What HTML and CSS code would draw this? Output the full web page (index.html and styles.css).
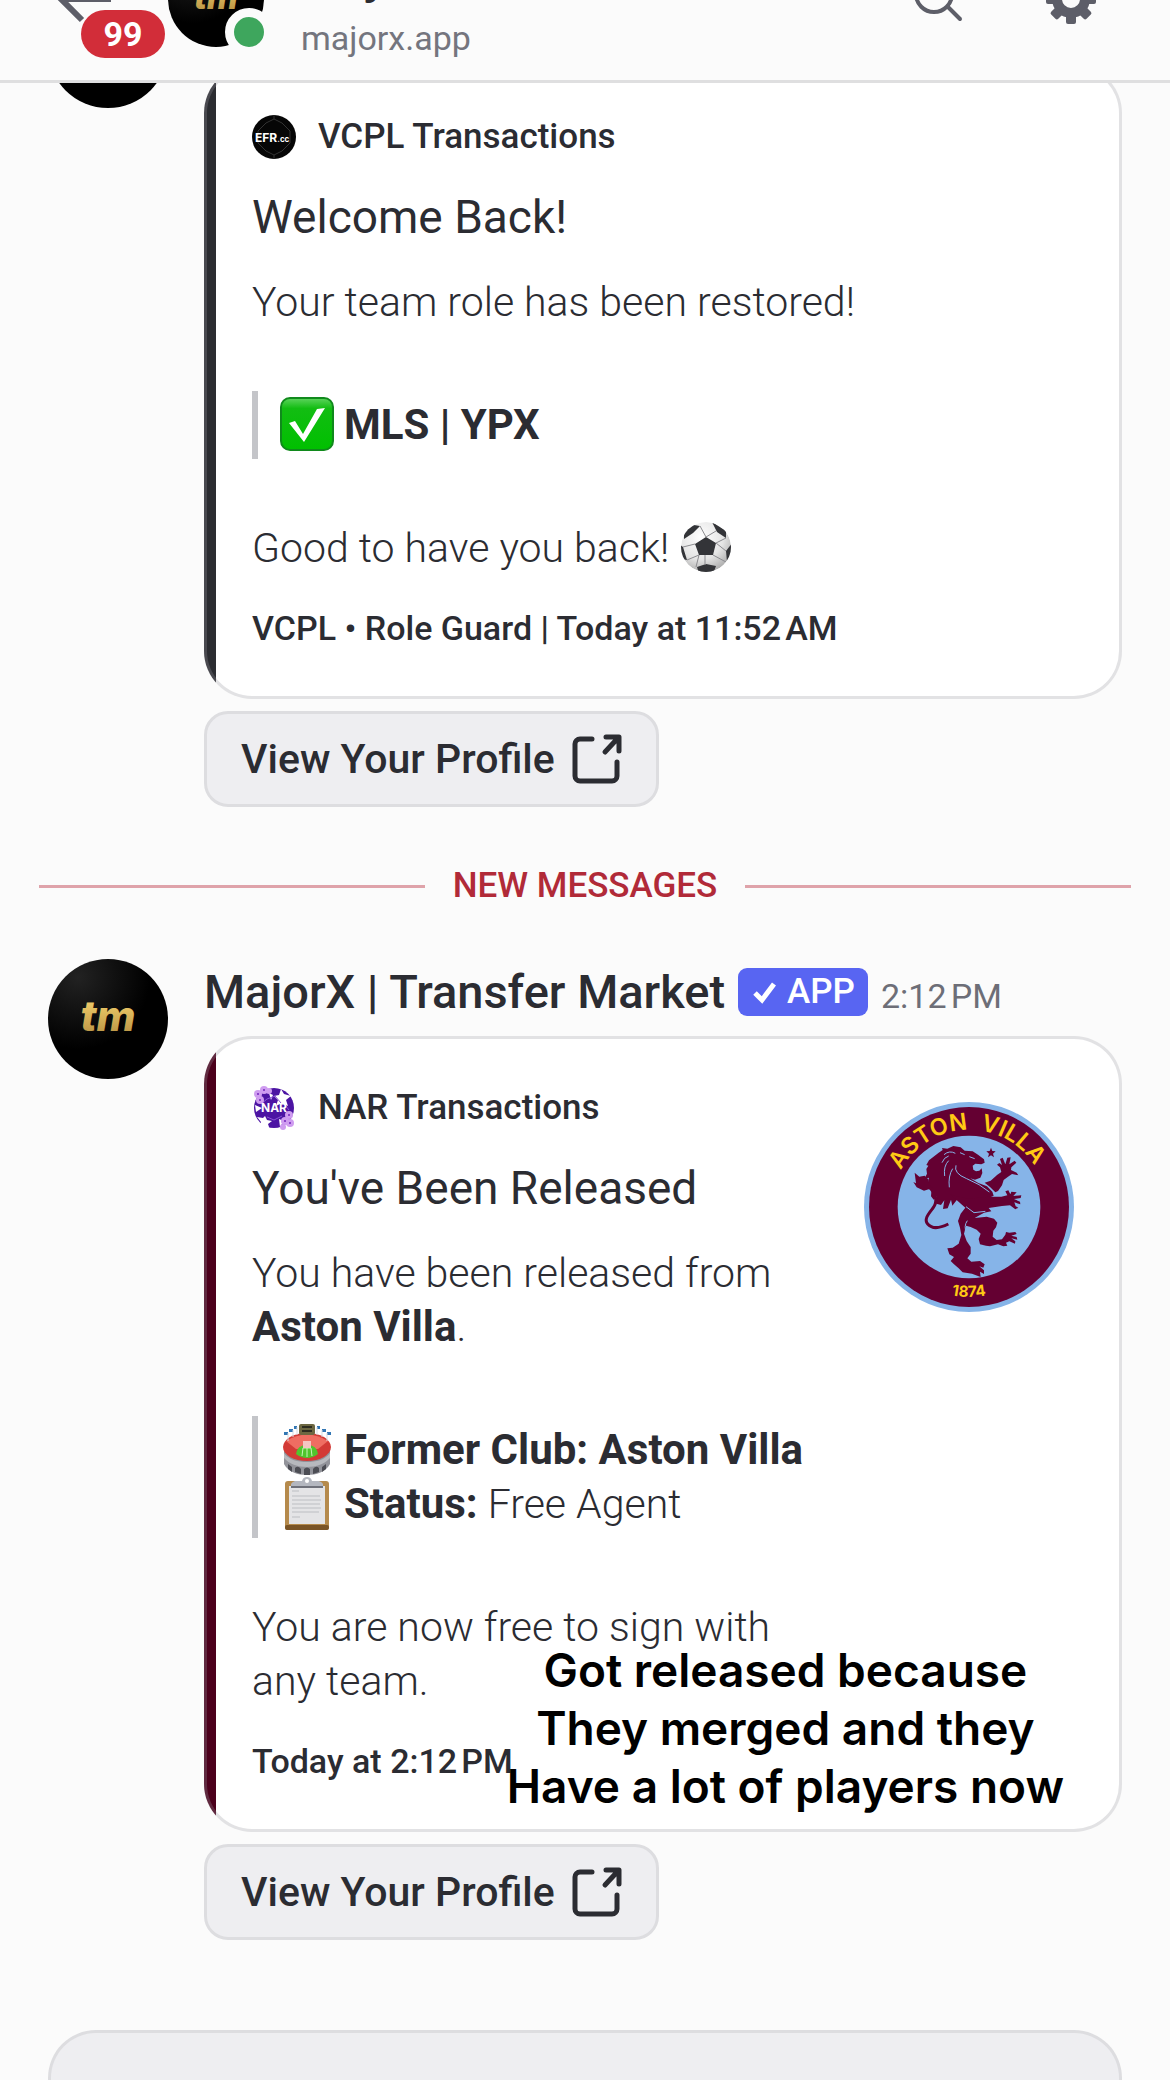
FILE: index.html
```html
<!DOCTYPE html>
<html lang="en">
<head>
    <meta charset="UTF-8">
    <meta name="viewport" content="width=device-width, initial-scale=1.0">
    <title>MajorX | Transfer Market</title>
    <link rel="stylesheet" href="styles.css">
</head>
<body>
    <!-- Shared icons -->
    <svg class="sprite" aria-hidden="true">
        <defs>
            <linearGradient id="gold" x1="0" y1="0" x2="0" y2="1">
                <stop offset="0.3" stop-color="#e8c565"/>
                <stop offset="1" stop-color="#b08a3e"/>
            </linearGradient>
            <radialGradient id="avatarShade" cx="0.25" cy="0.15" r="0.6">
                <stop offset="0" stop-color="#222"/>
                <stop offset="1" stop-color="#000"/>
            </radialGradient>
            <linearGradient id="green" x1="0" y1="0" x2="0" y2="1">
                <stop offset="0" stop-color="#5fd45f"/>
                <stop offset="0.2" stop-color="#12bd12"/>
                <stop offset="1" stop-color="#00c000"/>
            </linearGradient>
            <radialGradient id="ballShade" cx="0.4" cy="0.3" r="0.75">
                <stop offset="0" stop-color="#fff"/>
                <stop offset="0.6" stop-color="#e4e4e4"/>
                <stop offset="1" stop-color="#a8a8a8"/>
            </radialGradient>
            <clipPath id="ballClip"><circle cx="27" cy="27" r="25"/></clipPath>
            <clipPath id="iconClip"><circle cx="22" cy="22" r="22"/></clipPath>
        </defs>
        <symbol id="avatar" viewBox="0 0 120 120">
            <circle cx="60" cy="60" r="60" fill="url(#avatarShade)"/>
            <text x="60" y="72" text-anchor="middle" class="avatar-text">tm</text>
        </symbol>
        <symbol id="external" viewBox="0 0 52 52">
            <g fill="none" stroke="currentColor" stroke-width="5" stroke-linecap="round" stroke-linejoin="round">
                <path d="M22 6H10a5 5 0 0 0-5 5v32a5 5 0 0 0 5 5h32a5 5 0 0 0 5-5V29"/>
                <path d="M36 4h13v14M48 5L35 19"/>
            </g>
        </symbol>
    </svg>

    <header class="topbar">
        <button class="back" aria-label="Back">
            <svg viewBox="0 0 60 60" width="60" height="60">
                <path d="M57 30H6M28 9L7 30l21 21" fill="none" stroke="#5d5e68" stroke-width="6"/>
            </svg>
            <span class="unread">99</span>
        </button>
        <div class="topbar-avatar">
            <svg width="96" height="96"><use href="#avatar"/></svg>
            <span class="status"></span>
        </div>
        <div class="topbar-title">
            <h1>MajorX</h1>
            <p>majorx.app</p>
        </div>
        <button aria-label="Search">
            <svg viewBox="0 0 60 60" width="60" height="60">
                <g fill="none" stroke="#5d5e68" stroke-width="4" stroke-linecap="round">
                    <circle cx="26" cy="25" r="18"/>
                    <path d="M40 38l12 12"/>
                </g>
            </svg>
        </button>
        <button aria-label="Settings">
            <svg viewBox="-30 -30 60 60" width="60" height="60">
                <g fill="#5d5e68">
                    <path fill-rule="evenodd" d="M0-19a19 19 0 1 0 0 38a19 19 0 1 0 0-38zM0-9a9 9 0 1 1 0 18a9 9 0 1 1 0-18z"/>
                    <g id="teeth">
                        <rect x="-5" y="-25" width="10" height="9" rx="2"/>
                        <rect x="-5" y="16" width="10" height="9" rx="2"/>
                        <rect x="-25" y="-5" width="9" height="10" rx="2"/>
                        <rect x="16" y="-5" width="9" height="10" rx="2"/>
                    </g>
                    <use href="#teeth" transform="rotate(45)"/>
                </g>
            </svg>
        </button>
    </header>

    <main class="messages">
        <article class="message continued">
            <svg class="avatar"><use href="#avatar"/></svg>
            <div class="message-body">
                <div class="embed">
                    <div class="embed-content">
                        <div class="author">
                            <svg viewBox="0 0 44 44" width="44" height="44">
                                <g clip-path="url(#iconClip)">
                                    <rect width="44" height="44" fill="#060606"/>
                                    <path d="M14 8l8-4 8 4M6 16l8-8M30 8l8 8M6 16v12M38 16v12M6 28l8 8M38 28l-8 8M14 36l8 4 8-4M22 4V0M22 40v4" fill="none" stroke="#333" stroke-width="1"/>
                                </g>
                                <text x="3" y="27" class="efr-text">EFR<tspan class="efr-small">.cc</tspan></text>
                            </svg>
                            <span>VCPL Transactions</span>
                        </div>
                        <h2>Welcome Back!</h2>
                        <div class="description">
                            <p>Your team role has been restored!</p>
                            <blockquote>
                                <p>
                                    <svg class="emoji" viewBox="0 0 54 54" role="img" aria-label="check mark">
                                        <rect x="1" y="1" width="52" height="52" rx="9" fill="url(#green)" stroke="#108a1c" stroke-width="2"/>
                                        <path d="M9 26l6-2 8 13L37 12l8-1L24 45z" fill="#fff"/>
                                    </svg>
                                    <strong>MLS | YPX</strong>
                                </p>
                            </blockquote>
                            <p>
                                Good to have you back!
                                <svg class="emoji" viewBox="0 0 54 54" role="img" aria-label="football">
                                    <g clip-path="url(#ballClip)">
                                        <circle cx="27" cy="27" r="25" fill="url(#ballShade)"/>
                                        <path d="M27 17l10 6-3 12H20l-4-11zM9 4l12 2-7 7-9 6V8zM33 2l14 9v7l-9-6zM54 22l-7 9 1 11 6-4zM0 24l4 3 4 13-6-1zM18 47l9-3 10 2-3 8H20z" fill="#333438"/>
                                        <path d="M27 17l-6-11M37 23l10-5M34 35l13 7M20 35l-3 12M16 24L4 27M27 17l10-6M26 35v10M47 31l-10-8M8 40l12-5" fill="none" stroke="#8b8b8f" stroke-width="1"/>
                                    </g>
                                </svg>
                            </p>
                        </div>
                        <footer>VCPL • Role Guard | Today at 11:52&#8239;AM</footer>
                    </div>
                </div>
                <a class="link-button" href="#profile">
                    View Your Profile
                    <svg width="52" height="52"><use href="#external"/></svg>
                </a>
            </div>
        </article>

        <div class="divider"><span>NEW MESSAGES</span></div>

        <article class="message">
            <svg class="avatar"><use href="#avatar"/></svg>
            <div class="message-body">
                <div class="message-header">
                    <span class="name">MajorX | Transfer Market</span>
                    <span class="tag">
                        <svg viewBox="0 0 28 28" width="28" height="28">
                            <path d="M4 15l7 7L23 6" fill="none" stroke="#fff" stroke-width="5"/>
                        </svg>
                        APP
                    </span>
                    <time>2:12&#8239;PM</time>
                </div>
                <div class="embed claret">
                    <div class="embed-content">
                        <div class="author">
                            <svg viewBox="0 0 44 44" width="44" height="44">
                                <circle cx="22" cy="22" r="20" fill="#4c14a3"/>
                                <g fill="#fff">
                                    <path d="M29 3l3 5 7 2-5 4 2 6-6-3-6 3 2-6-4-4 5-1zM13 30l2 4 5 1-4 3 2 6-6-4-5 1 2-5-4-5 6 1zM3 19l7 3-6 4z"/>
                                    <path d="M17 7l4 2-2 5zM27 33l5 2-4 6z"/>
                                </g>
                                <g fill="none" stroke="#8a55d6" stroke-width="1">
                                    <path d="M15 13l8-3 6 7M15 31l7 3 8-4M9 18l6-5M33 19l4 5"/>
                                </g>
                                <g fill="#cf9cf0">
                                    <circle cx="6" cy="8" r="4"/><circle cx="12" cy="4" r="4"/><circle cx="8" cy="14" r="4"/><circle cx="17" cy="5" r="3"/>
                                    <circle cx="37" cy="29" r="4"/><circle cx="33" cy="35" r="4"/><circle cx="38" cy="37" r="4"/><circle cx="31" cy="41" r="3"/>
                                </g>
                                <g fill="#7326bd">
                                    <circle cx="6" cy="8" r="1"/><circle cx="12" cy="4" r="1"/><circle cx="8" cy="14" r="1"/>
                                    <circle cx="37" cy="29" r="1"/><circle cx="33" cy="35" r="1"/><circle cx="38" cy="37" r="1"/>
                                </g>
                                <text x="22" y="26" text-anchor="middle" class="nar-text">NAR</text>
                            </svg>
                            <span>NAR Transactions</span>
                        </div>
                        <h2>You've Been Released</h2>
                        <div class="description">
                            <p>You have been released from <strong>Aston Villa</strong>.</p>
                            <blockquote>
                                <p>
                                    <svg class="emoji" viewBox="0 0 54 54" role="img" aria-label="stadium">
                                        <path d="M4 22h46v20c-4 8-14 11-23 11S8 50 4 42z" fill="#92939a"/>
                                        <path d="M4 31c5 7 14 9 23 9s18-2 23-9v5c-5 6-14 9-23 9S9 42 4 36z" fill="#b7b9be"/>
                                        <path d="M8 42l4 3v5l-4-3zM15 46q3-3 6 1v5l-6-2zM24 47q3-3 6 0v6h-6zM33 47q3-4 6-1v4l-6 2zM42 45l4-3v5l-4 3z" fill="#4c4d54"/>
                                        <ellipse cx="27" cy="25" rx="24" ry="14" fill="#d33a36"/>
                                        <path d="M6 19q21-13 42 0l-10 8H16z" fill="#ef6d62"/>
                                        <path d="M16 32q1-9 11-9t11 9q-5 4-11 4t-11-4z" fill="#4fc52d"/>
                                        <path d="M22 34l1-8h8l1 8M27 26v9" fill="none" stroke="#c9f3b8" stroke-width="1"/>
                                        <path d="M23 19h8v7h-8z" fill="#f3c6c2"/>
                                        <rect x="19" y="2" width="16" height="11" rx="2" fill="#6c6741"/>
                                        <path d="M22 5h10M22 9h10" stroke="#2d2c20" stroke-width="2"/>
                                        <path d="M4 10h4v3H4zM9 7h4v3H9zM14 4h3v3h-3zM37 4h3v3h-3zM42 7h4v3h-4zM47 10h4v3h-4z" fill="#3377b4"/>
                                        <path d="M8 11v8M13 8v7M17 5v8M37 5v8M42 8v7M47 11v8" stroke="#d5dbe2" stroke-width="1"/>
                                    </svg>
                                    <strong>Former Club: Aston Villa</strong>
                                </p>
                                <p>
                                    <svg class="emoji" viewBox="0 0 54 54" role="img" aria-label="clipboard">
                                        <rect x="5" y="5" width="44" height="49" rx="3" fill="#b58a4c"/>
                                        <rect x="5" y="49" width="44" height="5" rx="2" fill="#7a5426"/>
                                        <rect x="9" y="10" width="36" height="38" fill="#e4e4e6"/>
                                        <path d="M12 15h7M12 20h28M12 24h29M12 28h28M12 32h29M12 36h27M12 41h8" stroke="#d0d1d4" stroke-width="2"/>
                                        <path d="M11 11V8q1-2 4-3h7q1-4 5-4t5 4h7q3 1 4 3v3z" fill="#b4b7bf"/>
                                        <path d="M11 10h32v2H11z" fill="#6f717a"/>
                                        <circle cx="27" cy="5" r="2" fill="#fff"/>
                                    </svg>
                                    <strong>Status:</strong> Free Agent
                                </p>
                            </blockquote>
                            <p>You are now free to sign with any team.</p>
                        </div>
                        <footer>Today at 2:12&#8239;PM</footer>
                    </div>
                    <svg class="thumbnail" viewBox="12 6 630 630" role="img" aria-label="Aston Villa crest">
                        <defs>
                            <path id="arcTop" d="M95 321a232 232 0 0 1 464 0"/>
                            <path id="arcBottom" d="M57 321a270 270 0 0 0 540 0"/>
                        </defs>
                        <circle cx="327" cy="321" r="315" fill="#86b4e8"/>
                        <circle cx="327" cy="321" r="300" fill="#640032"/>
                        <circle cx="327" cy="321" r="214" fill="#86b4e8"/>
                        <g class="crest-name">
                            <text><textPath href="#arcTop" startOffset="114">ASTON</textPath></text>
                            <text><textPath href="#arcTop" startOffset="398">VILLA</textPath></text>
                        </g>
                        <text class="crest-year" text-anchor="middle"><textPath href="#arcBottom" startOffset="50%">1874</textPath></text>
                        <g fill="#640032">
                            <!-- star -->
                            <path d="M393 143l4 10 10 1-8 7 3 11-9-6-9 6 3-11-8-7 10-1z"/>
                            <!-- head and mane -->
                            <path d="M236 158l12-8-2-6 16 2 18-8 22 4 12 10 24 2 16 10 18 14 2 10-10 5-18-2-8 6 2 12 8 5 10-2 7-7 2 14-6 14-16 6-14-4 24 14 26 10 16 16 4 12-40 18-70-6-14 18-4-18-10 26-14 2 4-26-10 14-14-4 2-22-10 10-8-10 2-26-8 6-4-18 4-18-14 4 8-16-2-14 6-10-6-2 8-14z"/>
                            <!-- torso and hind legs -->
                            <path d="M272 284l52 12 64-6 36 0 18-4-6-12 9-3 6 12 3-8 16 2-10 11 24-2-2 8-20 3 18 8 1 8-18-6 4 12 8 4-9 5-16-12-24 2-40 6 8 10-22 4-28 16 36-4 22 6 10 12-4 14-8 10-2 18 12 10 16-2 10-14 2-8 10 2 18-2 4 6-16 5 16 4 2 8-18-4 12 9-1 7-17-7-10 4 4 9-12 2-16-6-24 6-12-2-18-4-4-16 6-16-12-12-18-8-14-4-6 24 8 22 12 18 0 20-10 14 12 10 26-2 14 10-4 10-12-4 14 12 0 11-12-7 2 16-10-4-16-6-28-4-12-12-14-12-10-10 10-12-14-8-6-18 16-2 18-12 8-26-4-22-6-20 8-22 14-18z"/>
                            <!-- raised foreleg -->
                            <path d="M374 248l18-6 20-18 12-8-4-14-9-8 7-5 8 6-6-18 8-4 8 20 6-20 10-1-4 21 16-11 5 6-15 14-1 8 17 8 5 8-19-4-12 8-13 10-5 16-12 17-8 4-16-16z"/>
                            <!-- tail tuft -->
                            <path d="M164 218l14 12 16-3 12 12 0 12 10 12-10 5-14 4-22-10-10-16 8 4z"/>
                        </g>
                        <path d="M211 264c20 24 22 42 8 60s-28 34-16 48 34 14 62 0" fill="none" stroke="#640032" stroke-width="9"/>
                        <g fill="none" stroke="#86b4e8" stroke-width="3">
                            <path d="M252 164q16-14 34-4M246 188q6-16 20-20M254 228q-4-30 12-46M268 262q-4-34 10-56M288 196q-8 24 32 40t68 40M300 158l14 6M328 170l16 6M318 320l24 18 34-4M322 362q-12 16-2 40"/>
                        </g>
                    </svg>
                    <p class="caption">Got released because<br>They merged and they<br>Have a lot of players now</p>
                </div>
                <a class="link-button" href="#profile">
                    View Your Profile
                    <svg width="52" height="52"><use href="#external"/></svg>
                </a>
            </div>
        </article>
    </main>

    <form class="composer">
        <input type="text" aria-label="Message">
    </form>
</body>
</html>
```

FILE: styles.css
```css
/* Base Styles */
* {
    margin: 0;
    padding: 0;
    box-sizing: border-box;
}

body {
    background: #fbfbfb;
    color: #2b2c32;
    font-family: Roboto, "Noto Sans", sans-serif;
    font-size: 41px;
    line-height: 54px;
    height: 100vh;
    display: flex;
    flex-direction: column;
    overflow: hidden;
}

button {
    background: none;
    border: none;
    font: inherit;
    cursor: pointer;
}

svg {
    display: block;
    flex: none;
}

.sprite {
    position: absolute;
    width: 0;
    height: 0;
}

/* Top bar */
.topbar {
    height: 83px;
    flex: none;
    display: flex;
    align-items: flex-end;
    padding: 0 69px 2px 54px;
    border-bottom: 3px solid #dfdfe0;
    overflow: hidden;
}

.topbar button {
    position: relative;
    margin-bottom: 49px;
}

.topbar button + button {
    margin-left: 73px;
}

.unread {
    position: absolute;
    left: 27px;
    top: 41px;
    width: 84px;
    height: 48px;
    border-radius: 24px;
    background: #d22d39;
    color: #fff;
    font-size: 34px;
    font-weight: 700;
    line-height: 48px;
    text-align: center;
}

.topbar-avatar {
    position: relative;
    margin: 0 37px 31px 54px;
}

.status {
    position: absolute;
    right: -9px;
    bottom: -9px;
    width: 48px;
    height: 48px;
    border: 9px solid #fbfbfb;
    border-radius: 50%;
    background: #3ea65d;
}

.topbar-title {
    flex: 1;
    padding-bottom: 16px;
}

.topbar-title h1 {
    font-size: 47px;
    font-weight: 500;
    line-height: 56px;
    margin-bottom: 8px;
}

.topbar-title p {
    color: #74757e;
    font-size: 34px;
    line-height: 48px;
}

/* Message list */
.messages {
    flex: 1;
    min-height: 0;
    display: flex;
    flex-direction: column;
    justify-content: flex-end;
    padding-bottom: 90px;
    overflow: hidden;
}

.message {
    display: flex;
    gap: 36px;
    padding: 0 48px;
}

.avatar {
    width: 120px;
    height: 120px;
}

.avatar-text {
    font: italic 800 42px Inter, sans-serif;
    fill: url(#gold);
}

.message-body {
    flex: 1;
    min-width: 0;
    padding-top: 5px;
}

.continued .message-body {
    padding-top: 77px;
}

.message-header {
    display: flex;
    align-items: baseline;
    gap: 13px;
    margin-bottom: 16px;
}

.name {
    font-size: 47px;
    font-weight: 500;
    line-height: 56px;
}

.tag {
    align-self: center;
    display: flex;
    align-items: center;
    gap: 8px;
    height: 48px;
    padding: 0 13px;
    border-radius: 9px;
    background: #5865f2;
    color: #fff;
    font-size: 35px;
    font-weight: 500;
}

time {
    color: #6d6e77;
    font-size: 34px;
    line-height: 44px;
}

/* Embeds */
.embed {
    --bar: #2b2c31;
    position: relative;
    display: flex;
    gap: 36px;
    padding: 47px 45px 46px;
    border: 3px solid rgba(151, 151, 159, 0.28);
    border-radius: 48px;
    background: linear-gradient(to right, var(--bar) 12px, #fff 12px) border-box;
}

.claret {
    --bar: #4c001c;
}

.embed-content {
    flex: 1;
    min-width: 0;
    display: flex;
    flex-direction: column;
    gap: 31px;
}

.author {
    display: flex;
    align-items: center;
    gap: 22px;
    font-size: 35px;
    font-weight: 500;
    line-height: 44px;
}

.efr-text {
    font: 700 12px Inter, sans-serif;
    fill: #fff;
}

.efr-small {
    font-size: 8px;
}

.nar-text {
    font: 700 12px Inter, sans-serif;
    fill: #fff;
}

.embed h2 {
    font-size: 46px;
    font-weight: 400;
    line-height: 54px;
}

.description {
    display: flex;
    flex-direction: column;
    gap: 62px;
    font-weight: 300;
}

strong {
    font-size: 42px;
    font-weight: 700;
}

blockquote {
    border-left: 6px solid #c4c5c9;
    padding: 7px 0 7px 22px;
}

.emoji {
    display: inline-block;
    width: 54px;
    height: 54px;
    margin: -4px 0;
    vertical-align: -8px;
}

.embed footer {
    font-size: 34px;
    font-weight: 500;
    line-height: 44px;
}

.thumbnail {
    width: 210px;
    height: 210px;
    margin-top: 16px;
}

.crest-name {
    font: 600 70px Inter, sans-serif;
    fill: #ffc914;
}

.crest-year {
    font: 700 46px Inter, sans-serif;
    fill: #ffc914;
}

.caption {
    position: absolute;
    right: 55px;
    bottom: 14px;
    color: #000;
    font-family: Inter, sans-serif;
    font-size: 46px;
    font-weight: 600;
    line-height: 58px;
    text-align: center;
}

.link-button {
    display: inline-flex;
    align-items: center;
    gap: 15px;
    height: 96px;
    margin-top: 12px;
    padding: 0 34px;
    border: 3px solid #dddde0;
    border-radius: 24px;
    background: #eeeef1;
    color: #2b2c32;
    font-weight: 500;
    text-decoration: none;
}

/* New messages divider */
.divider {
    display: flex;
    align-items: center;
    gap: 28px;
    margin: 57px 39px 51px;
    color: #b12a38;
    font-size: 35px;
    font-weight: 500;
    line-height: 44px;
}

.divider::before,
.divider::after {
    content: "";
    flex: 1;
    height: 3px;
    background: #dfa3aa;
}

/* Composer */
.composer {
    flex: none;
    padding: 0 48px;
}

.composer input {
    display: block;
    width: 100%;
    height: 50px;
    padding: 0 48px;
    border: 3px solid #dddde0;
    border-bottom: none;
    border-radius: 48px 48px 0 0;
    background: #eeeef1;
    font: inherit;
}
```
